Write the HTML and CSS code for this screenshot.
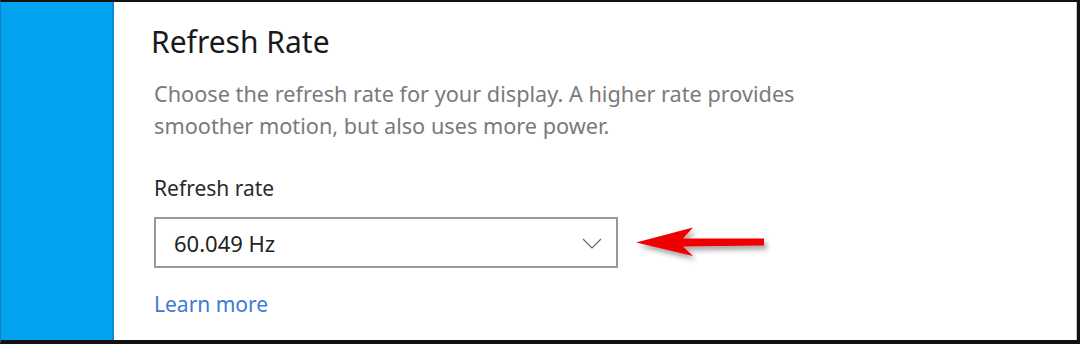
FILE: index.html
```html
<!DOCTYPE html>
<html lang="en">
<head>
    <meta charset="UTF-8">
    <title>Refresh Rate</title>
    <link rel="stylesheet" href="styles.css">
</head>
<body>
    <div class="frame">
        <div class="sidebar"></div>
        <div class="panel">
            <h1>Refresh Rate</h1>
            <p class="desc">Choose the refresh rate for your display. A higher rate provides smoother motion, but also uses more power.</p>

            <label class="label">Refresh rate</label>
            <div class="row">
                <div class="dropdown">
                    <span>60.049 Hz</span>
                    <svg class="chev" width="20" height="11" viewBox="0 0 20 11"><path d="M1 1 L10 10 L19 1" fill="none" stroke="#666" stroke-width="1.2"/></svg>
                </div>
                <svg class="arrow" width="145" height="46" viewBox="0 0 145 46">
                    <defs>
                        <filter id="sh" x="-10%" y="-30%" width="130%" height="190%">
                            <feDropShadow dx="3" dy="4" stdDeviation="2.5" flood-color="#000" flood-opacity="0.35"/>
                        </filter>
                    </defs>
                    <path d="M5 21.5 L62 6.5 L52 17.5 L133 17.5 L133 24.5 L52 25.5 L62 35 Z" fill="#ee0000" filter="url(#sh)"/>
                </svg>
            </div>

            <a class="learn" href="#">Learn more</a>
        </div>
    </div>
</body>
</html>
```

FILE: styles.css
```css
body { margin: 0; font-family: "Noto Sans", "Open Sans", sans-serif; background: #fff; }
.frame { display: flex; width: 1080px; height: 344px; box-sizing: border-box; border-top: 2px solid #111; border-right: 3px solid #111; border-bottom: 4px solid #111; border-left: 1px solid #0a7fc0; }
.sidebar { width: 111px; background: #02a4f0; border-right: 2px solid #0b8ad4; }
.panel { flex: 1; padding-left: 37px; border-right: 1px solid #ccc; }
h1 { margin: 20px 0 0; font-size: 30px; font-weight: 400; color: #1a1a1a; line-height: 40px; }
.desc { margin: 16px 0 0 3px; width: 680px; font-size: 21.7px; line-height: 32px; color: #7a7a7a; }
.label { display: block; margin: 31px 0 0 3px; font-size: 21px; line-height: 30px; color: #2a2a2a; }
.row { display: flex; align-items: center; margin-top: 14px; margin-left: 3px; }
.dropdown { box-sizing: border-box; width: 464px; height: 51px; border: 2px solid #999; display: flex; align-items: center; justify-content: space-between; padding: 0 14px 0 18px; font-size: 22px; color: #222; }
.chev { margin-top: 2px; }
.arrow { margin-left: 13px; margin-top: 2px; }
.learn { display: inline-block; margin: 22px 0 0 3px; font-size: 21px; color: #3d79d6; text-decoration: none; }
```
